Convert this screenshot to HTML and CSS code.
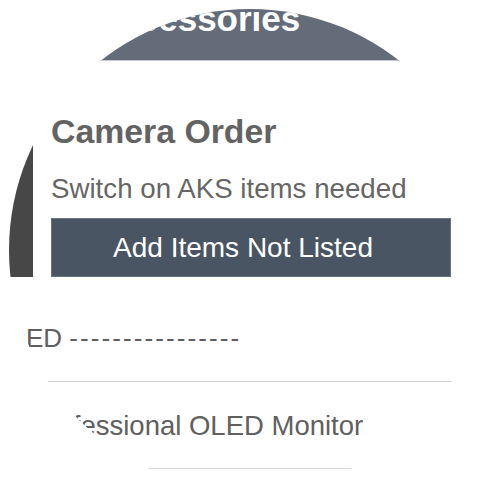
FILE: index.html
```html
<!DOCTYPE html>
<html lang="en">
<head>
<meta charset="utf-8">
<title>Camera Order</title>
<link rel="stylesheet" href="styles.css">
</head>
<body>
<div class="lens">
  <div class="header">
    <div class="header-title">Accessories</div>
  </div>
  <div class="order-row">
    <div class="side-bar"></div>
    <div class="order-col">
      <h1 class="order-title">Camera Order</h1>
      <p class="order-sub">Switch on AKS items needed</p>
      <button class="add-btn">Add Items Not Listed</button>
    </div>
  </div>
  <div class="section-label">ADDED <span class="dashes">----------------</span></div>
  <div class="divider"></div>
  <div class="list-item">Professional OLED Monitor</div>
  <div class="divider divider-low"></div>
</div>
</body>
</html>
```
FILE: styles.css
```css
html, body {
  margin: 0;
  padding: 0;
  background: #ffffff;
}

body {
  width: 500px;
  height: 500px;
  overflow: hidden;
  font-family: "Liberation Sans", Arial, sans-serif;
}

.lens {
  width: 482px;
  height: 482px;
  margin: 9px;
  border-radius: 50%;
  overflow: hidden;
  background: #ffffff;
}

.header {
  display: flow-root;
  height: 51px;
  background: #636c78;
  border-bottom: 1px solid #c6cad0;
  padding-left: 85px;
}

.header-title {
  color: #ffffff;
  font-weight: bold;
  font-size: 35px;
  line-height: 35px;
  margin-top: -8px;
}

.order-row {
  display: flex;
  align-items: stretch;
}

.side-bar {
  width: 24px;
  flex: none;
  background: #474747;
}

.order-col {
  margin-left: 18px;
  display: flex;
  flex-direction: column;
  align-items: flex-start;
}

.order-title {
  margin: 50px 0 0 0;
  font-size: 33.8px;
  line-height: 40px;
  font-weight: bold;
  color: #636363;
}

.order-sub {
  margin: 21px 0 0 0;
  font-size: 27.7px;
  line-height: 34px;
  color: #666666;
}

.add-btn {
  margin-top: 11.6px;
  width: 400px;
  height: 59px;
  box-sizing: border-box;
  background: #4a5563;
  border: 1px solid #6b7380;
  color: #ffffff;
  font-family: "Liberation Sans", Arial, sans-serif;
  font-size: 28px;
  padding: 2px 16px 0 0;
  display: flex;
  align-items: center;
  justify-content: center;
}

.section-label {
  margin: 45px 0 0 -38px;
  font-size: 26px;
  line-height: 32px;
  color: #5e5e5e;
  white-space: nowrap;
}

.dashes {
  letter-spacing: 2.1px;
}

.divider {
  height: 1px;
  background: #d5d5d5;
  margin-top: 27px;
}

.list-item {
  margin: 27.5px 0 0 21px;
  font-size: 27.5px;
  line-height: 34px;
  color: #606060;
  white-space: nowrap;
}

.divider-low {
  margin-top: 24.5px;
  background: #dadada;
}
```
